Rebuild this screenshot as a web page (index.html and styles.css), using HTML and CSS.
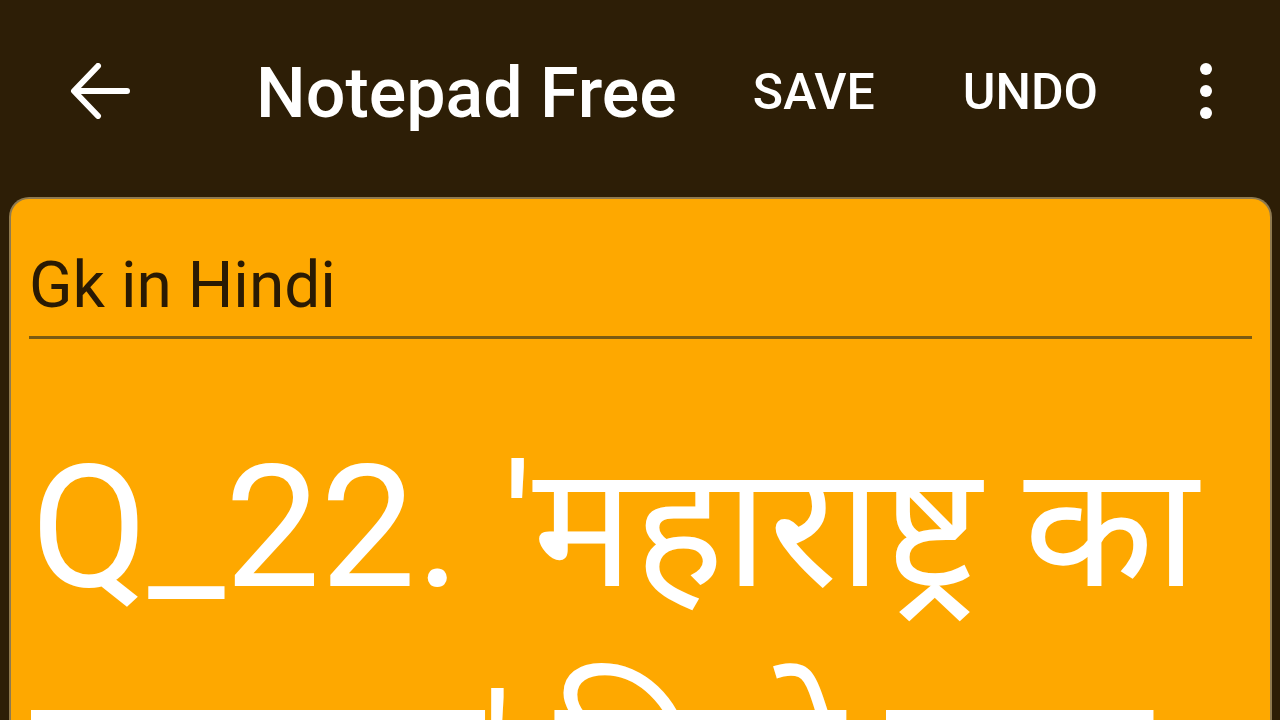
FILE: index.html
```html
<!DOCTYPE html>
<html lang="hi">
<head>
<meta charset="utf-8">
<title>Notepad Free</title>
<link rel="stylesheet" href="styles.css">
</head>
<body>
<div class="screen">
  <header class="toolbar">
    <button class="nav-btn" aria-label="Back">
      <svg class="back-icon" viewBox="0 0 60 56" width="60" height="56">
        <path d="M57 28 H5 M28 3 L4 28 L28 53" fill="none" stroke="#fff" stroke-width="6" stroke-linecap="round" stroke-linejoin="round"/>
      </svg>
    </button>
    <h1 class="app-title">Notepad Free</h1>
    <nav class="actions">
      <span class="action save">SAVE</span>
      <span class="action undo">UNDO</span>
      <span class="overflow" aria-label="More options">
        <i class="dot"></i><i class="dot"></i><i class="dot"></i>
      </span>
    </nav>
  </header>
  <main class="note-card">
    <div class="note-title">Gk in Hindi</div>
    <div class="note-body">Q_22. 'महाराष्ट्र का सरताज' किसे कहा जाता है?</div>
  </main>
</div>
</body>
</html>
```

FILE: styles.css
```css
* { box-sizing: border-box; }
html, body {
  margin: 0;
  padding: 0;
  width: 1280px;
  height: 720px;
  overflow: hidden;
  background: #2d1e06;
}
.screen {
  width: 1280px;
  height: 720px;
  display: flex;
  flex-direction: column;
  font-family: Roboto, "Noto Sans Devanagari", "Noto Sans", sans-serif;
}
.toolbar {
  height: 182px;
  flex: 0 0 182px;
  display: flex;
  align-items: center;
  color: #fff;
}
.nav-btn {
  background: none;
  border: 0;
  padding: 0;
  margin: 0 0 0 70px;
  width: 60px;
  height: 56px;
  display: flex;
  cursor: pointer;
}
.back-icon { display: block; }
.app-title {
  margin: 4px 0 0 126px;
  font-size: 70px;
  font-weight: 500;
  letter-spacing: 0;
  white-space: nowrap;
}
.actions {
  display: flex;
  align-items: center;
  margin-left: 76px;
}
.action {
  font-size: 50px;
  font-weight: 500;
  padding-top: 2px;
}
.undo { margin-left: 88px; }
.overflow {
  display: flex;
  flex-direction: column;
  gap: 10px;
  margin-left: 102px;
}
.dot {
  display: block;
  width: 12px;
  height: 12px;
  border-radius: 50%;
  background: #fff;
}
.note-card {
  flex: 1 1 auto;
  margin: 15px 8px 0 9px;
  background: #fea800;
  border: 2px solid #8f7a4f;
  border-bottom: 0;
  border-radius: 20px 20px 0 0;
  padding: 0 18px 0 18px;
  overflow: hidden;
}
.note-title {
  font-size: 64px;
  line-height: 77px;
  color: #2a1a03;
  padding-top: 48px;
  padding-bottom: 12px;
  border-bottom: 3px solid #7a5a12;
}
.note-body {
  color: #fff;
  font-size: 170px;
  line-height: 230px;
  margin-top: 74px;
  padding-left: 2px;
}
```
